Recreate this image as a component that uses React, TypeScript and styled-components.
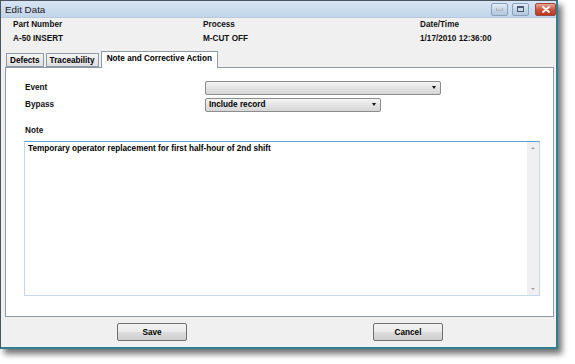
import React from "react";
import styled, { createGlobalStyle } from "styled-components";

const GlobalStyle = createGlobalStyle`
  html, body {
    margin: 0;
    padding: 0;
    background: #ffffff;
  }
  body {
    font-family: "Liberation Sans", Arial, sans-serif;
    color: #000;
  }
`;

const Page = styled.div`
  width: 575px;
  height: 364px;
`;

const Window = styled.div`
  width: 558px;
  height: 349px;
  box-sizing: border-box;
  display: flex;
  flex-direction: column;
  border: 1px solid #4a5560;
  border-bottom: 2px solid #2f7f93;
  border-right: 2px solid #2f7f93;
  background: #f0f0f0;
  box-shadow: 4px 5px 6px rgba(0, 0, 0, 0.55);
`;

const TitleBar = styled.div`
  height: 16px;
  display: flex;
  align-items: center;
  justify-content: space-between;
  padding: 0 0 0 4px;
  background: linear-gradient(#d7e4f2, #c2d5ea);
  border-bottom: 1px solid #b7c9dd;
`;

const Title = styled.span`
  font-size: 9.8px;
  color: #1a1a1a;
`;

const Controls = styled.div`
  display: flex;
  gap: 4px;
  align-items: center;
`;

const CtlButton = styled.div<{ $close?: boolean; $w: number }>`
  width: ${(p) => p.$w}px;
  height: 13px;
  box-sizing: border-box;
  border: 1px solid ${(p) => (p.$close ? "#9b4a3e" : "#8aa1bb")};
  border-radius: 2px;
  margin-left: ${(p) => (p.$close ? 2 : 0)}px;
  background: ${(p) =>
    p.$close
      ? "linear-gradient(#e9a593, #c9503a 55%, #b73a25)"
      : "linear-gradient(#e3ecf6, #c6d5e6 55%, #b5c7dc)"};
  display: flex;
  align-items: center;
  justify-content: center;
`;

const Body = styled.div`
  flex: 1;
  display: flex;
  flex-direction: column;
  padding: 0 2px 0 4px;
`;

const Header = styled.div`
  display: grid;
  grid-template-columns: 190px 217px 1fr;
  padding: 0 0 0 8px;
  height: 33px;
`;

const Field = styled.div`
  display: flex;
  flex-direction: column;
`;

const Label = styled.div`
  font-size: 8.2px;
  font-weight: bold;
  line-height: 14px;
  color: #111;
  white-space: nowrap;
`;

const TabRow = styled.div`
  display: flex;
  align-items: flex-end;
  height: 16px;
  padding-left: 1px;
  position: relative;
  z-index: 1;
`;

const Tab = styled.div<{ $active?: boolean }>`
  height: 14px;
  box-sizing: border-box;
  padding: 1px 3px 0 3px;
  margin-right: 2px;
  font-size: 8.2px;
  font-weight: bold;
  line-height: 12px;
  white-space: nowrap;
  border: 1px solid #8e9aa6;
  background: linear-gradient(#f4f4f4, #e0e0e0);
  ${(p) =>
    p.$active
      ? `
    height: 17px;
    margin-bottom: -1px;
    padding: 1px 5px 0 5px;
    border-bottom: none;
    background: #ffffff;
  `
      : ""}
`;

const Panel = styled.div`
  width: 549px;
  height: 250px;
  box-sizing: border-box;
  background: #ffffff;
  border: 1px solid #8e9aa6;
  padding: 11px 13px 0 19px;
  display: flex;
  flex-direction: column;
`;

const FormRow = styled.div`
  display: grid;
  grid-template-columns: 180px 1fr;
  align-items: center;
  height: 17px;
`;

const Combo = styled.div<{ $w: number }>`
  width: ${(p) => p.$w}px;
  height: 14px;
  box-sizing: border-box;
  border: 1px solid #8c8c8c;
  border-radius: 2px;
  background: linear-gradient(#f3f3f3, #e4e4e4 50%, #d6d6d6);
  display: flex;
  align-items: center;
  justify-content: space-between;
  padding: 0 4px 0 3px;
  font-size: 8.2px;
  font-weight: bold;
`;

const Arrow = styled.span`
  width: 0;
  height: 0;
  border-left: 2.5px solid transparent;
  border-right: 2.5px solid transparent;
  border-top: 3px solid #111;
`;

const NoteLabel = styled(Label)`
  margin-top: 11px;
  margin-bottom: 3px;
`;

const NoteBox = styled.div`
  width: 516px;
  height: 155px;
  margin-left: -1px;
  box-sizing: border-box;
  border: 1px solid #c8d8e8;
  border-top: 1px solid #5f9fd3;
  display: flex;
`;

const NoteText = styled.div`
  flex: 1;
  padding: 2px 3px;
  font-size: 8.2px;
  font-weight: bold;
  line-height: 10px;
`;

const ScrollBar = styled.div`
  width: 12px;
  background: #f0f0f0;
  display: flex;
  flex-direction: column;
  justify-content: space-between;
  align-items: center;
  padding: 5px 0;
`;

const SmallArrow = styled.span<{ $up?: boolean }>`
  width: 0;
  height: 0;
  border-left: 2px solid transparent;
  border-right: 2px solid transparent;
  ${(p) => (p.$up ? "border-bottom: 2px solid #a0a0a0;" : "border-top: 2px solid #a0a0a0;")}
`;

const Footer = styled.div`
  flex: 1;
  display: flex;
  align-items: center;
  padding-left: 112px;
  gap: 186px;
`;

const Button = styled.div`
  width: 70px;
  height: 18px;
  box-sizing: border-box;
  border: 1px solid #707070;
  border-radius: 2px;
  background: linear-gradient(#f2f2f2, #ebebeb 50%, #dddddd 51%, #cfcfcf);
  display: flex;
  align-items: center;
  justify-content: center;
  font-size: 8.2px;
  font-weight: bold;
`;

export default function App() {
  return (
    <Page>
      <GlobalStyle />
      <Window>
        <TitleBar>
          <Title>Edit Data</Title>
          <Controls>
            <CtlButton $w={17}>
              <svg width="7" height="3" viewBox="0 0 7 3">
                <rect x="0" y="0" width="7" height="2" fill="#fff" stroke="#5a6b80" strokeWidth="0.6" />
              </svg>
            </CtlButton>
            <CtlButton $w={17}>
              <svg width="7" height="6" viewBox="0 0 7 6">
                <rect x="0.5" y="0.5" width="6" height="5" fill="none" stroke="#4a5b70" strokeWidth="1" />
                <rect x="0.5" y="0.5" width="6" height="1.5" fill="#4a5b70" />
              </svg>
            </CtlButton>
            <CtlButton $w={21} $close>
              <svg width="8" height="7" viewBox="0 0 8 7">
                <path d="M1 1 L7 6 M7 1 L1 6" stroke="#fff" strokeWidth="1.8" strokeLinecap="round" />
              </svg>
            </CtlButton>
          </Controls>
        </TitleBar>
        <Body>
          <Header>
            <Field>
              <Label>Part Number</Label>
              <Label>A-50 INSERT</Label>
            </Field>
            <Field>
              <Label>Process</Label>
              <Label>M-CUT OFF</Label>
            </Field>
            <Field>
              <Label>Date/Time</Label>
              <Label>1/17/2010 12:36:00</Label>
            </Field>
          </Header>
          <TabRow>
            <Tab>Defects</Tab>
            <Tab>Traceability</Tab>
            <Tab $active>Note and Corrective Action</Tab>
          </TabRow>
          <Panel>
            <FormRow>
              <Label>Event</Label>
              <Combo $w={236}>
                <span />
                <Arrow />
              </Combo>
            </FormRow>
            <FormRow>
              <Label>Bypass</Label>
              <Combo $w={176}>
                <span>Include record</span>
                <Arrow />
              </Combo>
            </FormRow>
            <NoteLabel>Note</NoteLabel>
            <NoteBox>
              <NoteText>Temporary operator replacement for first half-hour of 2nd shift</NoteText>
              <ScrollBar>
                <SmallArrow $up />
                <SmallArrow />
              </ScrollBar>
            </NoteBox>
          </Panel>
          <Footer>
            <Button>Save</Button>
            <Button>Cancel</Button>
          </Footer>
        </Body>
      </Window>
    </Page>
  );
}
